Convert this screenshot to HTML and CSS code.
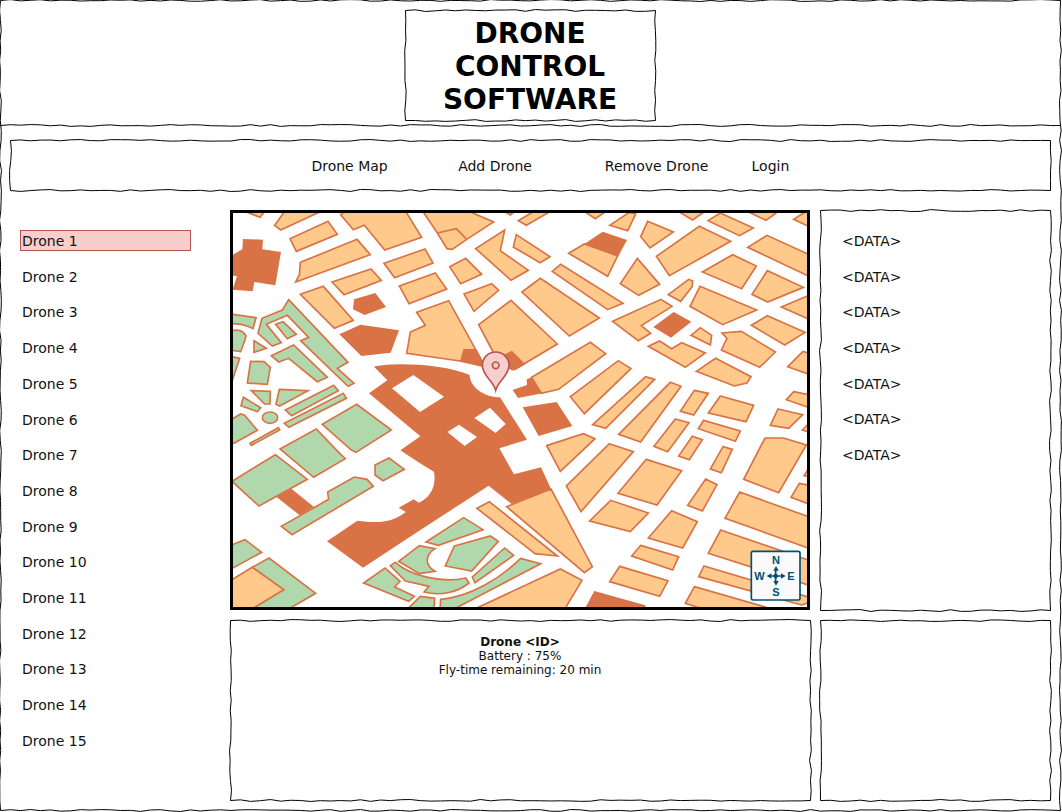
FILE: index.html
```html
<!DOCTYPE html>
<html lang="en">
<head>
<meta charset="utf-8">
<title>Drone Control Software</title>
<link rel="stylesheet" href="styles.css">
</head>
<body>
<div class="frame sketch">
  <header class="header sketch-bottom">
    <h1 class="title sketch">DRONE CONTROL SOFTWARE</h1>
  </header>

  <nav class="nav sketch">
    <a class="nav-link" href="#map">Drone Map</a>
    <a class="nav-link" href="#add">Add Drone</a>
    <a class="nav-link" href="#remove">Remove Drone</a>
    <a class="nav-link" href="#login">Login</a>
  </nav>

  <main class="main">
    <aside class="drones">
      <button class="drone selected" type="button" aria-pressed="true">Drone 1</button>
      <button class="drone" type="button">Drone 2</button>
      <button class="drone" type="button">Drone 3</button>
      <button class="drone" type="button">Drone 4</button>
      <button class="drone" type="button">Drone 5</button>
      <button class="drone" type="button">Drone 6</button>
      <button class="drone" type="button">Drone 7</button>
      <button class="drone" type="button">Drone 8</button>
      <button class="drone" type="button">Drone 9</button>
      <button class="drone" type="button">Drone 10</button>
      <button class="drone" type="button">Drone 11</button>
      <button class="drone" type="button">Drone 12</button>
      <button class="drone" type="button">Drone 13</button>
      <button class="drone" type="button">Drone 14</button>
      <button class="drone" type="button">Drone 15</button>
    </aside>

    <section class="map" id="map" aria-label="Drone map">
      <svg class="map-art" viewBox="15 15 1722 1182" preserveAspectRatio="xMidYMid slice">
        <!-- north-west -->
        <g>
          <path class="block" d="M50 10 96 28 110 10ZM170 10 140 52 158 66 275 12ZM186 92 300 40 328 79 205 130ZM338 20 376 65 409 52 470 126 581 88 530 5 360 5ZM217 163 387 94 427 140 203 222 214 200ZM468 166 591 123 615 165 500 209ZM514 234 622 195 656 243 543 287ZM312 222 429 183 460 217 348 260ZM217 259 286 235 376 337 319 361ZM566 313 662 278 768 470 696 459 536 436 547 372 592 352Z"/>
          <path class="built" d="M45 93 105 95 103 124 159 132 142 232 79 222 74 250 14 245 27 204 12 203 12 142 43 124ZM378 274 442 255 474 297 410 321 375 304ZM334 379 397 350 513 367 488 434 400 444Z"/>
          <path class="park" d="M5 318 84 329 75 362 60 355Q35 346 5 347ZM5 370Q40 358 54 384L50 398 38 431 5 426ZM182 275 360 463 328 481 378 526 360 535 218 398 242 388 178 322 115 349 160 404 133 414 90 376 102 331 163 306ZM143 349 165 341 205 379 178 392Z"/>
        </g>
        <!-- north -->
        <g transform="translate(576 0)">
          <path class="block" d="M5 5 52 75 81 122 97 124 140 94 221 42 135 5ZM245 5 271 21 290 5ZM295 38 350 5 400 5 319 52ZM485 5 526 32 565 5ZM167 122 254 66 241 128 325 187 273 217ZM289 80 390 146 360 164 280 117ZM446 136 493 108 593 143 563 205ZM89 176 137 151 185 199 122 227ZM132 258 215 227 236 247 162 310ZM397 190 422 169 609 286 563 305ZM306 252 361 211 538 330 448 384Z"/>
          <path class="block" d="M52 75 109 62 140 94"/>
          <path class="built" d="M493 108 548 71 621 96 594 146Z"/>
        </g>
        <!-- north-east -->
        <g transform="translate(1152 0)">
          <path class="block" d="M-7 52 52 13 71 18 47 68ZM107 40 184 72 114 120 86 86ZM190 5 242 36 286 5ZM288 38 325 15 424 60 382 83ZM395 5 462 37 491 16 480 5ZM545 34 590 5 600 60ZM133 145 262 55 356 100 172 203ZM407 118 465 82 600 144 600 209ZM271 192 362 140 433 174 389 242ZM25 227 76 151 143 229 80 262ZM420 259 466 188 574 238 467 282ZM169 260 230 214 242 219 240 237 206 280ZM234 295 264 235 434 306 332 350ZM508 297 600 258 600 338ZM2 340 147 274 180 295 88 353 116 376 79 398ZM237 382 265 359 299 382 295 411ZM330 375 388 370 490 432 443 478 328 426 345 391ZM418 352 466 323 579 373 518 411Z"/>
          <path class="built" d="M124 357 185 312 238 341 177 389Z"/>
        </g>
        <!-- west -->
        <g transform="translate(0 396)">
          <path class="park" d="M5 48 35 55 5 145ZM78 2 115 25 78 37ZM68 64 108 65 127 82 118 133 58 129ZM130 47 197 15 298 112 268 125 182 55 152 66ZM70 152 127 154 126 192 110 192ZM154 148 240 152 155 198 144 193ZM46 172 98 203 88 215 39 197ZM5 241 38 222 50 226 88 271 5 317ZM172 210 317 136 331 152 191 227ZM169 250 346 160 355 175 183 262ZM66 310 151 263 155 270 70 316ZM283 253 386 193 490 270 384 337 370 330ZM156 327 265 267 335 340 352 356 257 412ZM142 344 238 418 93 498 12 424ZM441 375 483 354 529 388 465 422 441 405Z"/>
          <ellipse class="park" cx="126" cy="233" rx="23" ry="17"/>
        </g>
        <!-- south-west -->
        <g transform="translate(0 792)">
          <path class="built" d="M145 74 190 50 258 105 215 130Z"/>
          <path class="park" d="M299 60 379 15 417 22 436 43 192 188 160 163 302 82ZM5 221 51 203 101 241 5 293ZM73 286 123 258 263 364 175 415 65 415 167 353ZM407 333 471 288 516 328 500 345 559 373 542 388ZM487 281 502 271C545 310 640 335 713 318L723 333C690 360 640 373 588 360L603 343 532 327ZM512 268 574 221 621 230C590 250 590 280 621 298L574 305ZM535 415 577 373 620 379 618 415Z"/>
          <path class="block" d="M5 327 73 286 167 353 65 415 5 415Z"/>
        </g>
        <!-- centre complex -->
        <g transform="translate(576 396)">
          <path class="built" fill-rule="evenodd" d="M-138 80C-90 68 60 68 149 105C150 140 190 172 240 172L321 299 238 325 282 403 363 382 393 447 275 492 206 437 0 571-171 683-279 604-188 542C-120 552-80 545-43 516L-64 503-19 478-4 488C30 475 50 440 42 395L0 370-59 331 1 289-153 160-98 121ZM-84 145-20 105 72 170 0 216ZM163 234 210 203 257 252 227 279ZM82 276 117 254 171 291 134 318Z"/>
          <path class="block" d="M176-46 273-119 412 12 285 88 240 75ZM335 112 511 7 557 41 416 148 364 160ZM451 170 595 62 633 86 493 221ZM518 254 677 110 704 118 557 265ZM380 317 490 281 525 296 421 394ZM568 311 640 335 483 515 439 438Z"/>
          <path class="built" d="M130 27 168 27 195 76 185 80 120 65ZM250 45 276 32 316 73 280 92 255 82ZM335 112 367 160 294 174 278 150 321 135 320 118ZM308 202 410 186 457 258 356 288Z"/>
        </g>
        <!-- east -->
        <g transform="translate(1152 396)">
          <path class="block" d="M20 283 175 127 207 139 86 306ZM109 19 143 3 179 26 209 8 280 39 220 82ZM253 94 311 55 417 110 405 129 367 138ZM247 151 289 160 245 225 205 214ZM325 168 425 196 402 245 289 219ZM275 241 385 273 370 304 259 266ZM190 237 231 248 167 335 126 319ZM241 289 271 299 232 359 200 348ZM333 320 361 328 328 398 295 387ZM545 155 600 166 600 206 523 179ZM498 207 572 224 530 265 475 256ZM571 270 600 240 600 280ZM459 294 514 294 583 315 500 458 395 418ZM576 407 600 370 600 410ZM527 80 573 34 600 42 600 106ZM103 358 209 392 135 495 18 460Z"/>
        </g>
        <!-- south -->
        <g transform="translate(576 792)">
          <path class="block" d="M171 109 208 89 412 252 345 245ZM260 104 393 51 517 284 493 302ZM155 415 421 291 486 325 432 415ZM509 147 572 85 685 123 631 179Z"/>
          <path class="park" d="M62 382C150 375 240 320 302 259L362 275 95 415 60 415ZM18 210 131 137 189 173 55 220ZM103 222 211 192 235 208 155 297 76 282ZM157 315 254 228 281 250 165 332Z"/>
          <path class="built" d="M492 415 523 357 676 400 679 415Z"/>
        </g>
        <!-- south-east -->
        <g transform="translate(1152 792)">
          <path class="block" d="M-7 329 23 283 168 326 143 373ZM562 34 600 42 600 100 537 76ZM281 21 315 38 271 117 227 100ZM383 60 600 138 600 232 339 139ZM326 174 600 268 600 343 289 244ZM276 282 600 378 600 390 568 399 260 314ZM247 344 480 411 470 420 300 420 220 394ZM179 116 256 149 212 228 109 198ZM86 220 200 254 182 294 59 252Z"/>
        </g>
        <!-- drone position -->
        <g class="pin" transform="translate(803 472)">
          <path d="M0 75C-8 45-40 32-40 0A40 40 0 0 1 40 0C40 32 8 45 0 75Z"/>
          <circle r="10"/>
        </g>
        <!-- compass -->
        <g transform="translate(1643 1103)">
          <rect class="compass-box" x="-73" y="-73" width="146" height="146" rx="5"/>
          <path class="compass-line" d="M0-18V20M-18 1H20"/>
          <circle class="compass-fill" cy="1" r="7"/>
          <path class="compass-fill" d="M1-29 9-15H-7ZM1 30 9 16H-7ZM-27 1-13-7V9ZM30 1 16-7V9Z"/>
          <text class="compass-text" x="1" y="-34">N</text>
          <text class="compass-text" x="1" y="61">S</text>
          <text class="compass-text" x="-49" y="12">W</text>
          <text class="compass-text" x="46" y="12">E</text>
        </g>
      </svg>
    </section>

    <section class="data sketch" aria-label="Drone data">
      <span>&lt;DATA&gt;</span>
      <span>&lt;DATA&gt;</span>
      <span>&lt;DATA&gt;</span>
      <span>&lt;DATA&gt;</span>
      <span>&lt;DATA&gt;</span>
      <span>&lt;DATA&gt;</span>
      <span>&lt;DATA&gt;</span>
    </section>

    <section class="status sketch">
      <h2 class="status-title">Drone &lt;ID&gt;</h2>
      <p>Battery : 75%</p>
      <p>Fly-time remaining: 20 min</p>
    </section>

    <section class="extra sketch" aria-label="Additional panel"></section>
  </main>
</div>
<script src="sketch.js"></script>
</body>
</html>
```
FILE: styles.css
```css
* {
  box-sizing: border-box;
}

body {
  margin: 0;
  background: #fff;
  color: #111;
  font: 14px/21px "DejaVu Sans", Verdana, sans-serif;
}

h1, h2, p {
  margin: 0;
}

.frame {
  display: flex;
  flex-direction: column;
  min-height: calc(100vh - 2px);
  margin: 0 2px 2px 0;
}

.sketch,
.sketch-bottom {
  position: relative;
}

/* Hand-drawn outline, filled in by sketch.js */
.sketch-line {
  position: absolute;
  top: 0;
  left: 0;
  width: 100%;
  height: 100%;
  overflow: visible;
  pointer-events: none;
  fill: none;
  stroke: #000;
  stroke-width: 1;
  stroke-linejoin: round;
}

.header {
  display: flex;
  justify-content: center;
  padding: 10px 0 5px;
}

.title {
  width: 250px;
  padding: 7px 30px 4px;
  color: #000;
  text-align: center;
  font-size: 28px;
  line-height: 33px;
  font-weight: bold;
}

.nav {
  display: grid;
  grid-template-columns: 302fr repeat(4, 147fr) 152fr;
  align-items: center;
  height: 50px;
  margin: 15px 10px 20px;
  padding-top: 2px;
}

.nav-link {
  color: inherit;
  text-decoration: none;
  white-space: nowrap;
}

.nav-link:first-child {
  grid-column-start: 2;
}

.main {
  flex: 1;
  display: grid;
  grid-template-columns: 210px minmax(0, 1fr) 230px;
  grid-template-rows: auto 1fr;
  gap: 10px;
  padding: 0 10px 10px;
}

.drones {
  grid-row: span 2;
  display: flex;
  flex-direction: column;
  justify-content: space-between;
  padding: 20px 29px 49px 10px;
}

.drone {
  height: 21px;
  padding: 2px 1px 0;
  border: 1px solid transparent;
  background: none;
  color: inherit;
  font: inherit;
  line-height: 17px;
  text-align: left;
}

.selected {
  border-color: #b85450;
  background: #f8cecc;
}

.map {
  border: 3px solid #000;
}

.map-art {
  display: block;
  width: 100%;
}

.block,
.park {
  fill: #ffc98b;
  stroke: #d97245;
  stroke-width: 5;
}

.park {
  fill: #b1d8ad;
}

.built {
  fill: #d97245;
}

.pin {
  fill: #f8cecc;
  stroke: #b85450;
  stroke-width: 5;
}

.compass-box {
  fill: #fafafa;
  stroke: #00506f;
  stroke-width: 5;
}

.compass-line {
  stroke: #00506f;
  stroke-width: 5;
}

.compass-fill,
.compass-text {
  fill: #00506f;
}

.compass-text {
  font: bold 33px "Liberation Sans", Arial, sans-serif;
  text-anchor: middle;
}

.data {
  display: flex;
  flex-direction: column;
  justify-content: space-between;
  padding: 21px 22px 144px;
}

.status {
  min-height: 180px;
  padding: 15px;
  text-align: center;
  font-size: 12px;
  line-height: 14px;
}

.status-title {
  font-size: 12px;
}
```
FILE: sketch.js
```js
// Draws a slightly wavering outline around .sketch boxes and under .sketch-bottom ones.
const NS = "http://www.w3.org/2000/svg";
const STEP = 10;

function wobble(seed) {
  let s = seed;
  return () => {
    s = (s * 16807) % 2147483647;
    return (s / 2147483647 - 0.5) * 2;
  };
}

function side(x1, y1, x2, y2, rand) {
  const length = Math.hypot(x2 - x1, y2 - y1);
  const dx = (x2 - x1) / length;
  const dy = (y2 - y1) / length;
  let d = "";
  for (let t = STEP; t < length - 2; t += STEP) {
    const r = rand();
    d += `L${x1 + dx * t - dy * r} ${y1 + dy * t + dx * r}`;
  }
  return `${d}L${x2} ${y2}`;
}

function draw(box, path, seed) {
  const rand = wobble(seed);
  const r = box.clientWidth + 0.5;
  const b = box.clientHeight + 0.5;
  const o = 0.5;
  path.setAttribute("d", box.classList.contains("sketch")
    ? `M${o} ${o}${side(o, o, r, o, rand)}${side(r, o, r, b, rand)}${side(r, b, o, b, rand)}${side(o, b, o, o, rand)}`
    : `M${o} ${b}${side(o, b, r, b, rand)}`);
}

document.querySelectorAll(".sketch, .sketch-bottom").forEach((box, i) => {
  const svg = document.createElementNS(NS, "svg");
  const path = document.createElementNS(NS, "path");
  svg.setAttribute("class", "sketch-line");
  svg.setAttribute("aria-hidden", "true");
  svg.append(path);
  box.append(svg);
  const update = () => draw(box, path, 4217 + i * 7919);
  update();
  window.addEventListener("resize", update);
});
```
